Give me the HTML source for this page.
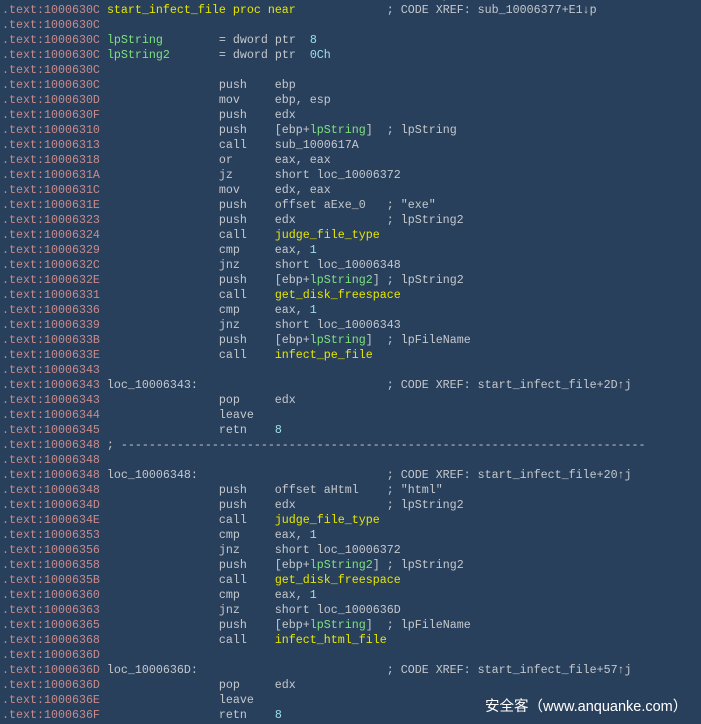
<!DOCTYPE html>
<html><head><meta charset="utf-8"><style>
html,body{margin:0;padding:0;background:#29405d;width:701px;height:724px;overflow:hidden;}
pre{position:absolute;left:2px;top:-12px;margin:0;font-family:"Liberation Mono",monospace;font-size:11.67px;line-height:15px;color:#c4c8cc;}
.a{color:#c98a8a}.y{color:#e6e600}.g{color:#7ee07e}.n{color:#9ee0e6}
.wm{position:absolute;left:485px;top:695px;font-family:"Liberation Sans","Noto Sans CJK SC",sans-serif;font-size:14.5px;color:#fff;white-space:nowrap;}
</style></head><body>
<pre><span class="a">.text:1000630C</span>                                  ; Attributes: bp-based frame
<span class="a">.text:1000630C</span> <span class="y">start_infect_file proc near</span>             ; CODE XREF: sub_10006377+E1↓p
<span class="a">.text:1000630C</span>
<span class="a">.text:1000630C</span> <span class="g">lpString</span>        = dword ptr  <span class="n">8</span>
<span class="a">.text:1000630C</span> <span class="g">lpString2</span>       = dword ptr  <span class="n">0Ch</span>
<span class="a">.text:1000630C</span>
<span class="a">.text:1000630C</span>                 push    ebp
<span class="a">.text:1000630D</span>                 mov     ebp, esp
<span class="a">.text:1000630F</span>                 push    edx
<span class="a">.text:10006310</span>                 push    [ebp+<span class="g">lpString</span>]  ; lpString
<span class="a">.text:10006313</span>                 call    sub_1000617A
<span class="a">.text:10006318</span>                 or      eax, eax
<span class="a">.text:1000631A</span>                 jz      short loc_10006372
<span class="a">.text:1000631C</span>                 mov     edx, eax
<span class="a">.text:1000631E</span>                 push    offset aExe_0   ; "exe"
<span class="a">.text:10006323</span>                 push    edx             ; lpString2
<span class="a">.text:10006324</span>                 call    <span class="y">judge_file_type</span>
<span class="a">.text:10006329</span>                 cmp     eax, <span class="n">1</span>
<span class="a">.text:1000632C</span>                 jnz     short loc_10006348
<span class="a">.text:1000632E</span>                 push    [ebp+<span class="g">lpString2</span>] ; lpString2
<span class="a">.text:10006331</span>                 call    <span class="y">get_disk_freespace</span>
<span class="a">.text:10006336</span>                 cmp     eax, <span class="n">1</span>
<span class="a">.text:10006339</span>                 jnz     short loc_10006343
<span class="a">.text:1000633B</span>                 push    [ebp+<span class="g">lpString</span>]  ; lpFileName
<span class="a">.text:1000633E</span>                 call    <span class="y">infect_pe_file</span>
<span class="a">.text:10006343</span>
<span class="a">.text:10006343</span> loc_10006343:                           ; CODE XREF: start_infect_file+2D↑j
<span class="a">.text:10006343</span>                 pop     edx
<span class="a">.text:10006344</span>                 leave
<span class="a">.text:10006345</span>                 retn    <span class="n">8</span>
<span class="a">.text:10006348</span> ; ---------------------------------------------------------------------------
<span class="a">.text:10006348</span>
<span class="a">.text:10006348</span> loc_10006348:                           ; CODE XREF: start_infect_file+20↑j
<span class="a">.text:10006348</span>                 push    offset aHtml    ; "html"
<span class="a">.text:1000634D</span>                 push    edx             ; lpString2
<span class="a">.text:1000634E</span>                 call    <span class="y">judge_file_type</span>
<span class="a">.text:10006353</span>                 cmp     eax, <span class="n">1</span>
<span class="a">.text:10006356</span>                 jnz     short loc_10006372
<span class="a">.text:10006358</span>                 push    [ebp+<span class="g">lpString2</span>] ; lpString2
<span class="a">.text:1000635B</span>                 call    <span class="y">get_disk_freespace</span>
<span class="a">.text:10006360</span>                 cmp     eax, <span class="n">1</span>
<span class="a">.text:10006363</span>                 jnz     short loc_1000636D
<span class="a">.text:10006365</span>                 push    [ebp+<span class="g">lpString</span>]  ; lpFileName
<span class="a">.text:10006368</span>                 call    <span class="y">infect_html_file</span>
<span class="a">.text:1000636D</span>
<span class="a">.text:1000636D</span> loc_1000636D:                           ; CODE XREF: start_infect_file+57↑j
<span class="a">.text:1000636D</span>                 pop     edx
<span class="a">.text:1000636E</span>                 leave
<span class="a">.text:1000636F</span>                 retn    <span class="n">8</span>
</pre>
<div class="wm">安全客（www.anquanke.com）</div>
</body></html>
